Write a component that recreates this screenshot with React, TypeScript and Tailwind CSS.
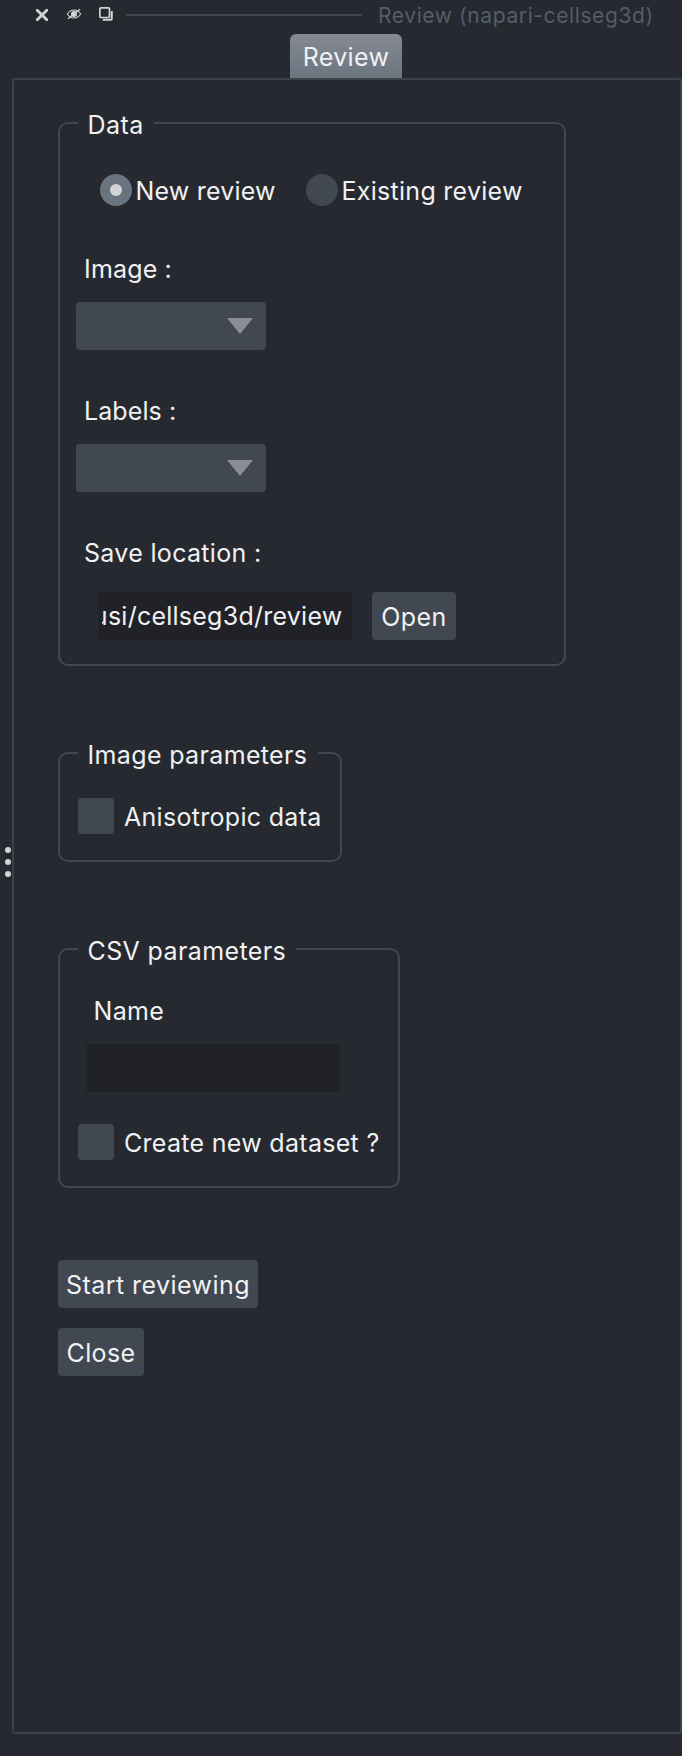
import type { ReactNode } from "react";

function Group({
  title,
  titleClass,
  className,
  children,
}: {
  title: string;
  titleClass: string;
  className: string;
  children: ReactNode;
}) {
  return (
    <section className={`flex flex-col items-start rounded-[10px] border-2 border-[#414851] ${className}`}>
      <h2 className={`-mt-[15px] ml-[18px] h-8 bg-[#262930] pl-[9.5px] ${titleClass}`}>{title}</h2>
      {children}
    </section>
  );
}

function Combo() {
  return (
    <div className="mt-[17px] ml-4 flex h-12 w-[190px] items-center justify-end rounded-[4px] bg-[#414851] pr-[13px]">
      <svg width="26" height="16" viewBox="0 0 26 16" className="block">
        <path d="M0 0h26L13 16z" fill="#8a8d94" />
      </svg>
    </div>
  );
}

function Check({ label, className }: { label: string; className: string }) {
  return (
    <label className={`ml-[18px] flex h-9 items-center tracking-[0.3px] ${className}`}>
      <span className="size-9 rounded-[4px] bg-[#414851]" />
      <span className="ml-[10px] pt-[2px]">{label}</span>
    </label>
  );
}

export default function App() {
  return (
    <div className="flex h-[1756px] w-[682px] flex-col overflow-hidden bg-[#262930] font-['Inter',sans-serif] text-[25px] leading-8 whitespace-nowrap text-[#f0f1f2]">
      <header className="flex h-[34px] items-start pl-9">
        <svg width="12" height="12" viewBox="0 0 12 12" className="mt-[8.5px]">
          <path d="M1.2 1.200l9.600 9.600M10.800 1.200L1.200 10.800" stroke="#d3d4d5" strokeWidth="2.800" strokeLinecap="round" />
        </svg>
        <svg width="16" height="12" viewBox="0 0 16 12" className="mt-2 ml-[18px]" fill="none" stroke="#d3d4d5">
          <path d="M1.3 6C3.500 2.800 6 2 8 2S12.500 2.800 14.700 6C12.500 9.200 10 10 8 10S3.500 9.200 1.300 6z" strokeWidth="1.100" />
          <circle cx="8" cy="6" r="3" fill="#d3d4d5" stroke="none" />
          <path d="M2 10.800L14 1.200" strokeWidth="1.400" />
        </svg>
        <svg width="14" height="14" viewBox="0 0 14 14" className="mt-[7px] ml-[17px]" fill="none" stroke="#d3d4d5">
          <rect x="0.900" y="0.900" width="9.600" height="9.600" rx="0.900" strokeWidth="1.700" />
          <path d="M12.800 4v7.800a1 1 0 0 1-1 1H3.800" strokeWidth="1.900" />
        </svg>
        <div className="mt-[14px] ml-[13px] h-[2px] w-[236px] bg-[#414851]" />
        <span className="ml-4 text-[21px] tracking-[0.6px] text-[#555d67]">Review (napari-cellseg3d)</span>
      </header>

      <div className="ml-[290px] flex h-11 w-28 justify-center rounded-t-[6px] bg-linear-to-b from-[#868a94] to-[#6a7580] pt-[7px] tracking-[0.3px]">
        Review
      </div>

      <div className="flex h-[1656px]">
        <div className="flex w-3 flex-col items-end justify-center gap-[6px] pr-[1px] pb-[88px]">
          <i className="size-[6px] rounded-full bg-[#d3d4d5]" />
          <i className="size-[6px] rounded-full bg-[#d3d4d5]" />
          <i className="size-[6px] rounded-full bg-[#d3d4d5]" />
        </div>
        <main className="flex w-[670px] flex-col items-start rounded-[3px] border-2 border-[#3a4149] pt-[42px] pl-11">
          <Group title="Data" titleClass="w-[76px] tracking-[0.45px]" className="h-[544px] w-[508px]">
            <div className="mt-[33px] ml-10 flex h-8">
              <label className="flex w-[206px]">
                <span className="flex size-8 items-center justify-center rounded-full bg-[#6a7380]">
                  <i className="size-3 rounded-full bg-[#d3d4d5]" />
                </span>
                <span className="ml-[3.500px] pt-px tracking-[0.2px]">New review</span>
              </label>
              <label className="flex">
                <span className="size-8 rounded-full bg-[#414851]" />
                <span className="ml-[3.500px] pt-px tracking-[0.280px]">Existing review</span>
              </label>
            </div>
            <div className="mt-[47px] ml-6 tracking-[0.170px]">Image :</div>
            <Combo />
            <div className="mt-[45px] ml-6 tracking-[0.1px]">Labels :</div>
            <Combo />
            <div className="mt-[45px] ml-6 tracking-[0.320px]">Save location :</div>
            <div className="mt-[23px] ml-[38px] flex h-12">
              <div className="flex w-[254px] items-center rounded-[4px] bg-[#212227] pr-[9.500px] pl-1">
                <div className="flex w-full justify-end overflow-hidden tracking-[0.250px]">usi/cellseg3d/review</div>
              </div>
              <button className="ml-5 w-[84px] rounded-[4px] bg-[#414851] pt-px tracking-[0.400px]">Open</button>
            </div>
          </Group>

          <Group title="Image parameters" titleClass="w-[240px] tracking-[0.350px]" className="mt-[86px] h-[110px] w-[284px]">
            <Check label="Anisotropic data" className="mt-[27px]" />
          </Group>

          <Group title="CSV parameters" titleClass="w-[218px] tracking-[0.380px]" className="mt-[86px] h-[240px] w-[342px]">
            <div className="mt-7 ml-[33.500px] tracking-[0.300px]">Name</div>
            <div className="mt-[17px] ml-[26px] h-12 w-[254px] rounded-[4px] bg-[#212227]" />
            <Check label="Create new dataset ?" className="mt-8" />
          </Group>

          <button className="mt-[72px] h-12 w-[200px] rounded-[4px] bg-[#414851] pt-[2px] tracking-[0.450px]">Start reviewing</button>
          <button className="mt-5 h-12 w-[86px] rounded-[4px] bg-[#414851] pt-[2px] tracking-[0.350px]">Close</button>
        </main>
      </div>
    </div>
  );
}
